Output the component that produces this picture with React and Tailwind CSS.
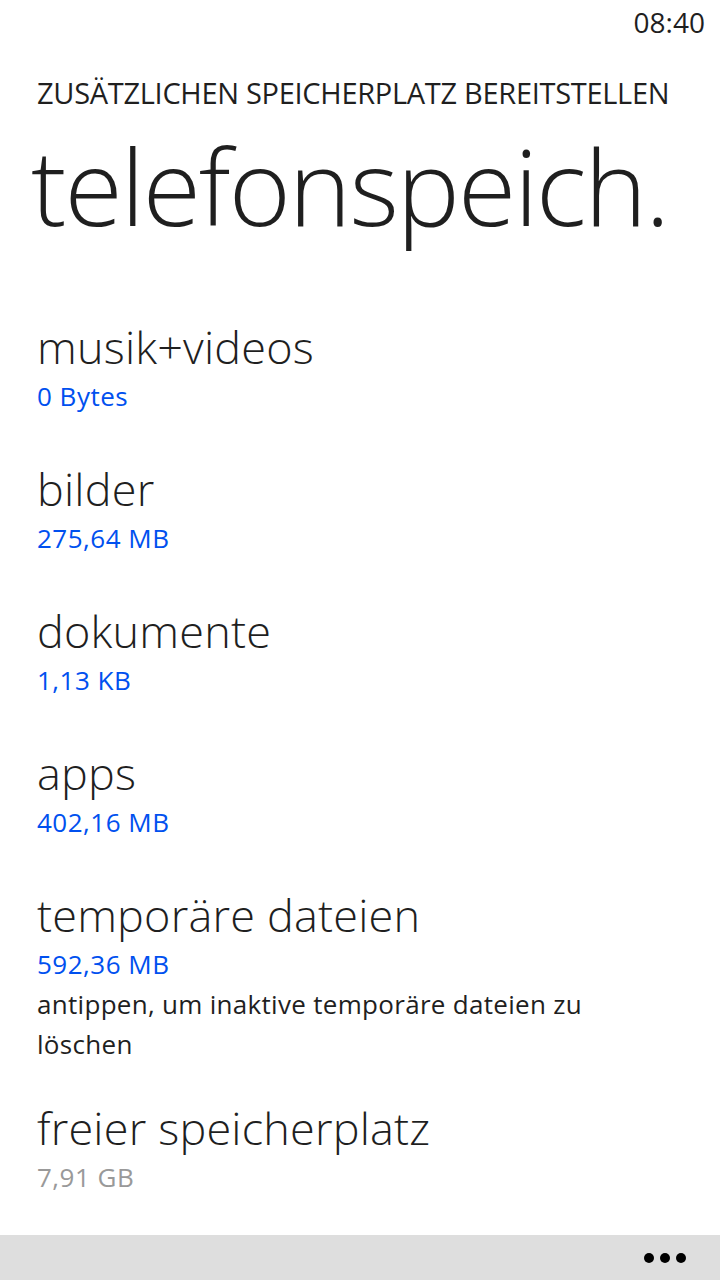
import React from "react";

const items = [
  { name: "musik+videos", size: "0 Bytes" },
  { name: "bilder", size: "275,64 MB" },
  { name: "dokumente", size: "1,13 KB" },
  { name: "apps", size: "402,16 MB" },
];

const font = { fontFamily: '"Open Sans", "Noto Sans", sans-serif' };

export default function App() {
  return (
    <div className="relative w-[720px] h-[1280px] bg-white text-[#1f1f1f] overflow-hidden" style={font}>
      {/* status bar */}
      <div className="flex justify-end h-[46px] pr-[15px] pt-[2px] text-[28px] leading-[40px]">08:40</div>

      {/* header */}
      <div className="pl-[37px] pt-[27px] text-[29px] leading-[40px] tracking-[-0.3px] whitespace-nowrap">
        ZUSÄTZLICHEN SPEICHERPLATZ BEREITSTELLEN
      </div>
      <div className="pl-[31px] text-[106px] leading-[144px] tracking-[-2px] font-light whitespace-nowrap">
        telefonspeich.
      </div>

      {/* storage list */}
      <div className="pl-[37px] pt-[61px]">
        {items.map((item) => (
          <div key={item.name} className="pb-[44px]">
            <div className="text-[45px] leading-[58px] tracking-[0.2px] font-light">{item.name}</div>
            <div className="text-[26px] leading-[40px] tracking-[0.5px] text-[#0050ef]">{item.size}</div>
          </div>
        ))}
        <div className="pb-[35px]">
          <div className="text-[45px] leading-[58px] tracking-[0.2px] font-light">temporäre dateien</div>
          <div className="text-[26px] leading-[40px] tracking-[0.5px] text-[#0050ef]">592,36 MB</div>
          <div className="w-[600px] text-[26px] leading-[40px] tracking-[0.3px]">
            antippen, um inaktive temporäre dateien zu löschen
          </div>
        </div>
        <div>
          <div className="text-[45px] leading-[58px] tracking-[0.2px] font-light">freier speicherplatz</div>
          <div className="text-[26px] leading-[40px] tracking-[0.5px] text-[#999999]">7,91 GB</div>
        </div>
      </div>

      {/* app bar */}
      <div className="absolute bottom-0 left-0 right-0 h-[45px] bg-[#dedede] flex items-center justify-end pr-[34px] gap-[6px]">
        <span className="w-[10px] h-[10px] rounded-full bg-black" />
        <span className="w-[10px] h-[10px] rounded-full bg-black" />
        <span className="w-[10px] h-[10px] rounded-full bg-black" />
      </div>
    </div>
  );
}
